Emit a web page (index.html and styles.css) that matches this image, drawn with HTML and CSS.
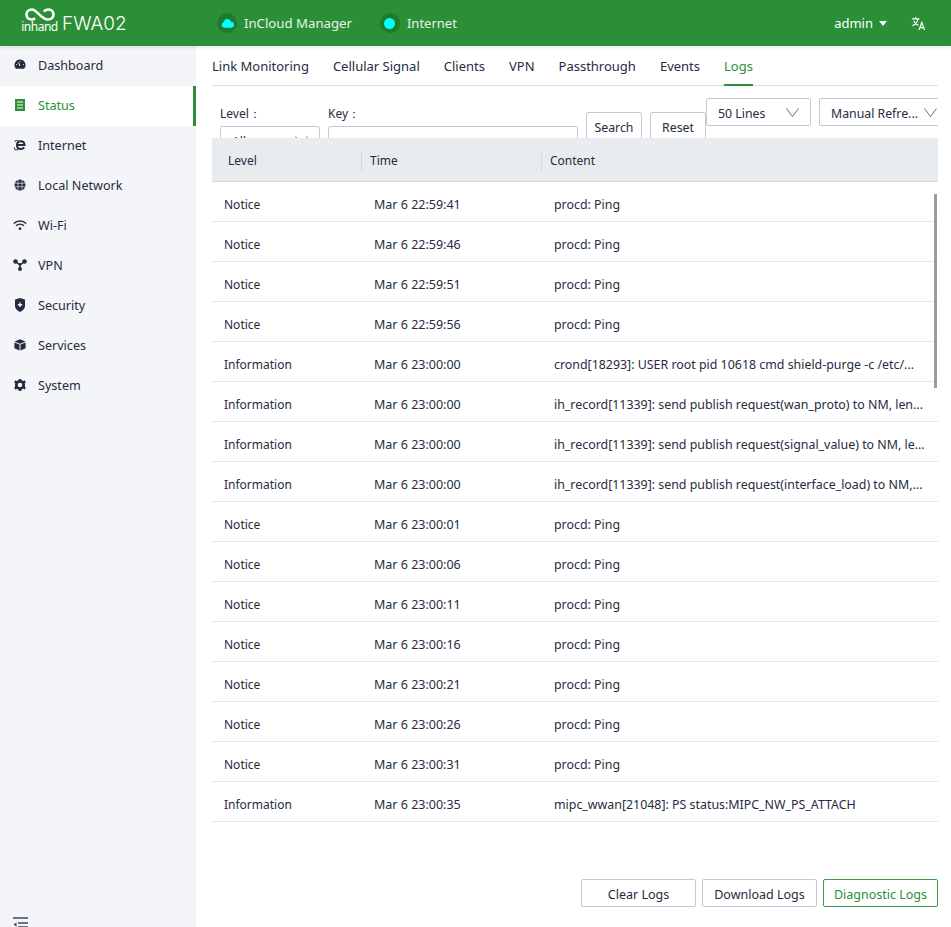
FILE: index.html
```html
<!DOCTYPE html>
<html lang="en">
<head>
<meta charset="utf-8">
<title>FWA02 Logs</title>
<link rel="stylesheet" href="styles.css">
</head>
<body>
<header class="topbar">
  <div class="brand">
    <div class="logo">
      <svg class="logo-mark" viewBox="0 0 30 13" width="30" height="13"><path d="M7 1.500C3.500 1.500 1.500 3.500 1.500 6.500s2 5 5 5c1.500 0 2.700-.5 3.700-1.300M7 1.500c5 0 9 10 16 10 3.500 0 5.500-2.200 5.500-5s-2-5-5-5c-2 0-3.500.8-4.700 2" fill="none" stroke="#fff" stroke-width="2.600"/></svg>
      <span class="logo-text">inhand</span>
    </div>
    <span class="model">FWA02</span>
  </div>
  <div class="status-item cloud-status">
    <span class="status-dot"><svg viewBox="0 0 14 10" width="13" height="10"><path d="M3.500 10a3 3 0 0 1-.6-5.900A4.200 4.200 0 0 1 11 3.600 3.200 3.200 0 0 1 10.800 10z" fill="#0ff"/></svg></span>
    <span>InCloud Manager</span>
  </div>
  <div class="status-item">
    <span class="status-dot"><i class="dot"></i></span>
    <span>Internet</span>
  </div>
  <div class="user">admin <i class="caret"></i></div>
  <svg class="lang" viewBox="0 0 16 16" width="15" height="15"><path d="M1 3h8M5 1v2M7.500 3C7 6 4.500 9 1.500 10.500M2.800 5c1 2.500 3 4.200 5 5" fill="none" stroke="#fff" stroke-width="1.200"/><path d="M8.500 15l3-8 3 8M9.600 12.500h3.800" fill="none" stroke="#fff" stroke-width="1.300"/></svg>
</header>
<div class="shell">
  <nav class="sidebar">
    <a class="nav-item"><svg class="nav-icon" viewBox="0 0 12 12"><path d="M6 .5a5.500 5.500 0 0 1 4.400 8.800q-.4.500-1 .5H2.600q-.6 0-1-.5A5.500 5.500 0 0 1 6 .5z" fill="#262b40"/><path d="M6 7 4.500 3.500M2.200 5.500h.8M9 5.500h.8M6 2v.8" stroke="#f3f5f8" stroke-width="1" fill="none"/></svg><span>Dashboard</span></a>
    <a class="nav-item active"><svg class="nav-icon" viewBox="0 0 12 12"><path d="M1 0h10v12H1z" fill="#2a8f36"/><path d="M3 3h6M3 6h6M3 9h6" stroke="#fff" stroke-width="1.200"/></svg><span>Status</span></a>
    <a class="nav-item"><svg class="nav-icon" viewBox="0 0 12 12"><path d="M3 6h7.500C10.500 3.500 8.800 2.200 6.700 2.200 4.500 2.200 3 3.800 3 6.300c0 2.400 1.500 3.700 3.700 3.700 1.500 0 2.800-.7 3.400-1.800" fill="none" stroke="#262b40" stroke-width="2"/><path d="M4 2C2 1 .8 1.400 .8 3M.5 8.500c-.6 2.500 1 3 3.500 2" fill="none" stroke="#262b40" stroke-width="1"/></svg><span>Internet</span></a>
    <a class="nav-item"><svg class="nav-icon" viewBox="0 0 12 12"><circle cx="6" cy="6" r="5.500" fill="#262b40"/><path d="M.5 4.300h11M.5 7.700h11M4 .8v10.400M8 .8v10.400" stroke="#f3f5f8" stroke-width=".6" fill="none"/></svg><span>Local Network</span></a>
    <a class="nav-item"><svg class="nav-icon wide" viewBox="0 0 14 12"><path d="M.8 4.500a9 9 0 0 1 12.400 0M3 6.800a6 6 0 0 1 8 0" fill="none" stroke="#262b40" stroke-width="1.500"/><circle cx="7" cy="9.700" r="1.400" fill="#262b40"/></svg><span>Wi-Fi</span></a>
    <a class="nav-item"><svg class="nav-icon wide" viewBox="0 0 14 12"><path d="M2.500 2.500 7 6l4.500-3.500M7 6v4" stroke="#262b40" stroke-width="1.500" fill="none"/><circle cx="2.500" cy="2.500" r="2.300" fill="#262b40"/><circle cx="11.500" cy="2.500" r="2.300" fill="#262b40"/><circle cx="7" cy="10" r="2" fill="#262b40"/><circle cx="7" cy="5.500" r="1.400" fill="#262b40"/></svg><span>VPN</span></a>
    <a class="nav-item"><svg class="nav-icon tall" viewBox="0 0 12 14"><path d="M1 1.500 6 0l5 1.500V8c0 2.500-2.500 5-5 6-2.500-1-5-3.500-5-6z" fill="#262b40"/><path d="M6 4.500v4.500M3.800 6.800h4.400" stroke="#f3f5f8" stroke-width="1.400"/></svg><span>Security</span></a>
    <a class="nav-item"><svg class="nav-icon" viewBox="0 0 12 12"><path d="M6 .3 11.500 2.500 6 4.800.5 2.500zM.4 3.500l5.100 2.100v6L.4 9.300zM11.600 3.500 6.500 5.600v6l5.100-2.300z" fill="#262b40"/></svg><span>Services</span></a>
    <a class="nav-item"><svg class="nav-icon" viewBox="0 0 12 12"><circle cx="6" cy="6" r="3.700" fill="none" stroke="#262b40" stroke-width="2.800"/><path d="M4.700 0h2.600v2H4.700zM4.700 10h2.600v2H4.700zM.1 3.400 1.400 1.200l1.800 1-1.300 2.200zM8.800 8.600l1.300-1.200 1.800 1.200-1.300 2.200zM.1 8.600l1.800-1 1.300 2.200-1.800 1zM8.800 2.200l1.800-1 1.300 2.200-1.800 1z" fill="#262b40"/></svg><span>System</span></a>
    <svg class="collapse" viewBox="0 0 15 12" width="15" height="12"><path d="M0 1h15M5 6h10M5 10h10" stroke="#41455a" stroke-width="1.500"/><path d="M3.500 5.500v4l-3-2z" fill="#41455a"/></svg>
  </nav>
  <main class="content">
    <div class="tabs">
      <a class="tab">Link Monitoring</a>
      <a class="tab">Cellular Signal</a>
      <a class="tab">Clients</a>
      <a class="tab">VPN</a>
      <a class="tab">Passthrough</a>
      <a class="tab">Events</a>
      <a class="tab active">Logs</a>
    </div>
    <div class="toolbar">
      <div class="field level-field">
        <label>Level：</label>
        <div class="control select"><span>All</span><svg class="chev" viewBox="0 0 13 9"><path d="M.5.500 6.500 8.500 12.500.5" fill="none" stroke="#6a6e7c" stroke-width="1"/></svg></div>
      </div>
      <div class="field key-field">
        <label>Key：</label>
        <div class="control"></div>
      </div>
      <button class="btn search-btn">Search</button>
      <button class="btn search-btn">Reset</button>
      <div class="control select lines"><span>50 Lines</span><svg class="chev" viewBox="0 0 13 9"><path d="M.5.500 6.500 8.500 12.500.5" fill="none" stroke="#6a6e7c" stroke-width="1"/></svg></div>
      <div class="control select refresh"><span>Manual Refre...</span><svg class="chev" viewBox="0 0 13 9"><path d="M.5.500 6.500 8.500 12.500.5" fill="none" stroke="#6a6e7c" stroke-width="1"/></svg></div>
    </div>
    <div class="table-wrap">
      <div class="thead">
        <div class="th col-level">Level</div>
        <div class="th col-time">Time</div>
        <div class="th col-content">Content</div>
      </div>
      <div class="row"><span class="col-level">Notice</span><span class="col-time">Mar 6 22:59:41</span><span class="col-content">procd: Ping</span></div>
      <div class="row"><span class="col-level">Notice</span><span class="col-time">Mar 6 22:59:46</span><span class="col-content">procd: Ping</span></div>
      <div class="row"><span class="col-level">Notice</span><span class="col-time">Mar 6 22:59:51</span><span class="col-content">procd: Ping</span></div>
      <div class="row"><span class="col-level">Notice</span><span class="col-time">Mar 6 22:59:56</span><span class="col-content">procd: Ping</span></div>
      <div class="row"><span class="col-level">Information</span><span class="col-time">Mar 6 23:00:00</span><span class="col-content">crond[18293]: USER root pid 10618 cmd shield-purge -c /etc/...</span></div>
      <div class="row"><span class="col-level">Information</span><span class="col-time">Mar 6 23:00:00</span><span class="col-content">ih_record[11339]: send publish request(wan_proto) to NM, len...</span></div>
      <div class="row"><span class="col-level">Information</span><span class="col-time">Mar 6 23:00:00</span><span class="col-content">ih_record[11339]: send publish request(signal_value) to NM, le...</span></div>
      <div class="row"><span class="col-level">Information</span><span class="col-time">Mar 6 23:00:00</span><span class="col-content">ih_record[11339]: send publish request(interface_load) to NM,...</span></div>
      <div class="row"><span class="col-level">Notice</span><span class="col-time">Mar 6 23:00:01</span><span class="col-content">procd: Ping</span></div>
      <div class="row"><span class="col-level">Notice</span><span class="col-time">Mar 6 23:00:06</span><span class="col-content">procd: Ping</span></div>
      <div class="row"><span class="col-level">Notice</span><span class="col-time">Mar 6 23:00:11</span><span class="col-content">procd: Ping</span></div>
      <div class="row"><span class="col-level">Notice</span><span class="col-time">Mar 6 23:00:16</span><span class="col-content">procd: Ping</span></div>
      <div class="row"><span class="col-level">Notice</span><span class="col-time">Mar 6 23:00:21</span><span class="col-content">procd: Ping</span></div>
      <div class="row"><span class="col-level">Notice</span><span class="col-time">Mar 6 23:00:26</span><span class="col-content">procd: Ping</span></div>
      <div class="row"><span class="col-level">Notice</span><span class="col-time">Mar 6 23:00:31</span><span class="col-content">procd: Ping</span></div>
      <div class="row"><span class="col-level">Information</span><span class="col-time">Mar 6 23:00:35</span><span class="col-content">mipc_wwan[21048]: PS status:MIPC_NW_PS_ATTACH</span></div>
      <div class="scroll-thumb"></div>
    </div>
    <div class="actions">
      <button class="btn action">Clear Logs</button>
      <button class="btn action">Download Logs</button>
      <button class="btn action primary">Diagnostic Logs</button>
    </div>
  </main>
</div>
</body>
</html>
```
FILE: styles.css
```css
* { box-sizing: border-box; }
html, body { margin: 0; height: 100%; overflow: hidden; }
body { font-family: "Noto Sans", sans-serif; font-size: 13px; color: #262b40; background: #fff; }
.topbar { height: 46px; background: #2a8f36; color: #e9f3ea; display: flex; align-items: center; position: relative; z-index: 2; box-shadow: 0 1px 5px rgba(0,0,0,.12); }
.brand { display: flex; align-items: center; width: 217px; padding-left: 22px; }
.logo { display: flex; flex-direction: column; align-items: center; width: 35px; margin-right: 5px; margin-bottom: 5px; }
.logo-mark { display: block; }
.logo-text { color: #fff; font-size: 12px; line-height: 12px; letter-spacing: -.5px; }
.model { color: #fff; font-size: 19px; font-family: "Inter", sans-serif; font-weight: 300; }
.status-item { display: flex; align-items: center; gap: 7px; font-size: 13px; }
.cloud-status { margin-right: 28px; font-size: 13.200px; }
.status-dot { width: 20px; height: 20px; border-radius: 50%; background: #1f7a2c; display: flex; align-items: center; justify-content: center; }
.dot { width: 11px; height: 11px; border-radius: 50%; background: #0ff; }
.user { margin-left: auto; font-size: 13px; color: #fff; display: flex; align-items: center; gap: 6px; margin-right: 24px; }
.caret { width: 0; height: 0; border: 4px solid transparent; border-top: 5px solid #fff; border-bottom: 0; }
.lang { margin-right: 25px; }
.shell { display: flex; height: 881px; }
.sidebar { width: 196px; flex: none; background: #f3f5f8; position: relative; }
.nav-item { display: flex; align-items: center; height: 40px; padding-left: 14px; color: #262b40; font-size: 12.600px; }
.nav-item span { padding-bottom: 2px; }
.nav-icon { width: 12px; height: 12px; margin-right: 12px; flex: none; margin-top: -2px; }
.nav-icon.wide { width: 14px; margin-left: -1px; margin-right: 11px; }
.nav-icon.tall { height: 14px; }
.nav-item.active { background: #fff; color: #2a8f36; border-right: 3px solid #2a8f36; }
.collapse { position: absolute; left: 13px; bottom: -2px; }
.content { flex: 1; min-width: 0; display: flex; flex-direction: column; padding: 0 13px 0 16px; }
.tabs { display: flex; height: 40px; border-bottom: 1px solid #dcdfe6; flex: none; gap: 24px; }
.tab { height: 40px; line-height: 40px; color: #262b40; font-size: 13px; }
.tab.active { color: #2a8f36; border-bottom: 2px solid #2a8f36; }
.toolbar { height: 52px; flex: none; overflow: hidden; display: flex; align-items: flex-start; padding-left: 8px; position: relative; }
.field { display: flex; flex-direction: column; margin-top: 18px; flex: none; }
.field label { font-size: 12px; height: 22px; line-height: 20px; }
.level-field { width: 100px; margin-right: 8px; }
.key-field { width: 250px; margin-right: 8px; }
.control { height: 28px; border: 1px solid #c5c9d6; border-radius: 2px; background: #fff; display: flex; align-items: center; flex: none; }
.select { padding: 0 11px; justify-content: space-between; font-size: 12.300px; }
.select span { padding-top: 2px; }
.chev { width: 13px; height: 9px; flex: none; display: block; }
.btn { font-family: inherit; font-size: 12.300px; color: #262b40; background: #fff; border: 1px solid #c5c9d6; border-radius: 2px; padding: 1px 0 0; flex: none; }
.search-btn { width: 56px; height: 30px; margin-top: 26px; margin-right: 8px; }
.search-btn + .search-btn { margin-right: 0; }
.lines { width: 105px; margin-top: 12px; margin-right: 8px; }
.refresh { width: 130px; margin-top: 12px; }
.table-wrap { flex: none; position: relative; }
.thead { display: flex; height: 44px; background: #e9ecef; border-bottom: 1px solid #d3d6de; align-items: center; font-size: 12px; padding-top: 2px; }
.th { height: 20px; line-height: 20px; padding-left: 16px; }
.th.col-level { width: 149px; }
.th.col-time, .th.col-content { border-left: 1px solid #d5d8de; padding-left: 8px; }
.col-level { width: 150px; flex: none; }
.col-time { width: 180px; flex: none; }
.col-content { flex: 1; min-width: 0; white-space: nowrap; overflow: hidden; }
.row { display: flex; height: 40px; align-items: center; border-bottom: 1px solid #e4e7ec; font-size: 12px; padding: 5px 0 0 12px; }
.row .col-time { font-size: 12.500px; }
.row .col-content { font-size: 12.400px; }
.scroll-thumb { position: absolute; right: 1px; top: 56px; width: 3px; height: 194px; background: #9a9ca3; }
.actions { margin-top: auto; display: flex; justify-content: flex-end; gap: 6px; padding-bottom: 20px; }
.action { width: 115px; height: 28px; font-size: 12.500px; padding-top: 2px; }
.primary { color: #2a8f36; border-color: #3f9b4a; }
```
